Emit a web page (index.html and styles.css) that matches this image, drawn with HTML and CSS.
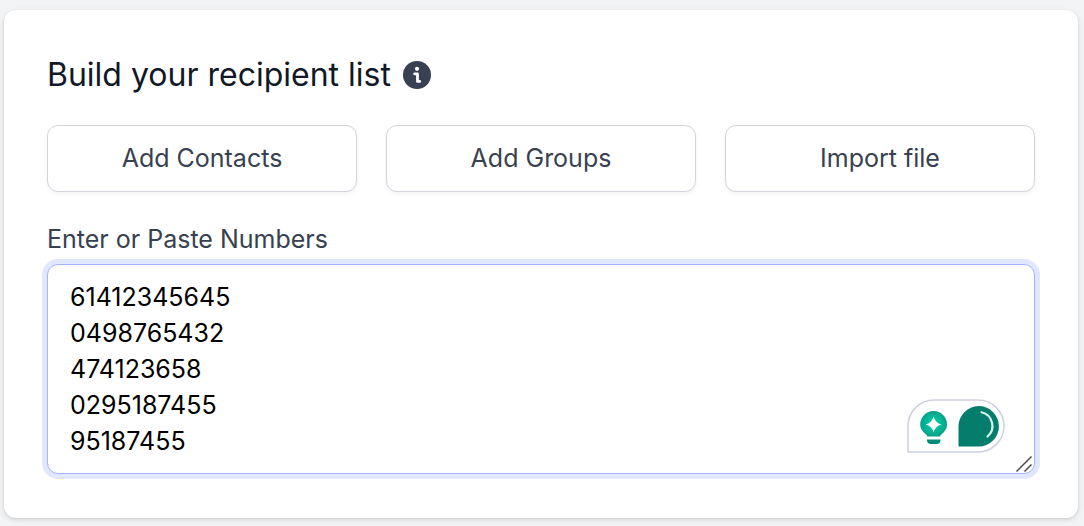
FILE: index.html
```html
<!DOCTYPE html>
<html lang="en">
<head>
    <meta charset="UTF-8">
    <meta name="viewport" content="width=device-width, initial-scale=1.0">
    <title>Build your recipient list</title>
    <link rel="stylesheet" href="styles.css">
</head>
<body>
    <main class="card">
        <div class="card-header">
            <h2 class="card-title">Build your recipient list</h2>
            <svg class="info-icon" viewBox="0 0 28 28" aria-hidden="true">
                <circle cx="14" cy="14" r="14" fill="#374151"/>
                <circle cx="14" cy="7.8" r="2.1" fill="#fff"/>
                <path d="M11.6 12.8h2.9v7.6h2.2" fill="none" stroke="#fff" stroke-width="2.8" stroke-linecap="round" stroke-linejoin="round"/>
            </svg>
        </div>

        <!-- Recipient sources -->
        <div class="source-buttons">
            <button type="button" class="source-button">Add Contacts</button>
            <button type="button" class="source-button">Add Groups</button>
            <button type="button" class="source-button">Import file</button>
        </div>

        <!-- Manual entry -->
        <div class="field">
            <label class="field-label" for="numbers">Enter or Paste Numbers</label>
            <div class="numbers-wrap">
                <textarea class="numbers-input" id="numbers" rows="5" spellcheck="false">61412345645
0498765432
474123658
0295187455
95187455</textarea>
                <svg class="assistant" viewBox="0 0 98 54" aria-hidden="true">
                    <defs>
                        <radialGradient id="bulb">
                            <stop offset="0.3" stop-color="#00c9a0"/>
                            <stop offset="1" stop-color="#05a088"/>
                        </radialGradient>
                    </defs>
                    <path d="M1 53V27A26 26 0 0 1 27 1H71A26 26 0 0 1 71 53Z" fill="#fff" stroke="#cdd1e0" stroke-width="1.5"/>
                    <path d="M20.5 37.5C20 35 13.2 32.5 13.2 25.5a13.4 13.4 0 0 1 26.8 0C40 32.500 33.500 35 33 37.500Z" fill="url(#bulb)"/>
                    <path d="M26.600 17.500Q28.200 23.900 34.600 25.500Q28.200 27.100 26.600 33.500Q25 27.100 18.600 25.500Q25 23.900 26.600 17.500Z" fill="#fff"/>
                    <path d="M20 40.500H33.500V41Q33.500 45 29.500 45H24Q20 45 20 41Z" fill="#028b78"/>
                    <path d="M51.500 47.500V27.500A20.200 20.200 0 1 1 71.700 47.500Z" fill="#047d6c"/>
                    <path d="M74.500 13.200A14 14 0 0 1 80.500 37.500" fill="none" stroke="#d5f3ec" stroke-width="2.200" stroke-linecap="round"/>
                </svg>
                <svg class="resize-grip" viewBox="0 0 18 18" aria-hidden="true">
                    <path d="M1.500 16.500L16.500 1.500M9.500 16.500L16.500 9.500" stroke="#4b4b4b" stroke-width="1.500"/>
                </svg>
            </div>
        </div>
    </main>
</body>
</html>
```
FILE: styles.css
```css
/* Global Styles */
* {
    box-sizing: border-box;
    font-family: Inter, "Liberation Sans", sans-serif;
}

body {
    margin: 0;
    padding: 10px 6px 8px 4px;
    background-color: #f3f4f6;
}

/* Card */
.card {
    display: flex;
    flex-direction: column;
    gap: 29px;
    padding: 44px 43px;
    background-color: #fff;
    border-radius: 12px;
    box-shadow: 0 2px 6px rgba(0, 0, 0, 0.1), 0 1px 3px rgba(0, 0, 0, 0.08);
}

.card-header {
    display: flex;
    align-items: center;
    gap: 12px;
}

.card-title {
    margin: 0;
    font-size: 32px;
    font-weight: 400;
    line-height: 42px;
    color: #111827;
}

.info-icon {
    width: 28px;
    height: 28px;
}

/* Source Buttons */
.source-buttons {
    display: grid;
    grid-template-columns: repeat(3, 1fr);
    gap: 29px;
}

.source-button {
    padding: 15px;
    border: 1px solid #d1d5db;
    border-radius: 11px;
    background-color: #fff;
    box-shadow: 0 2px 4px rgba(0, 0, 0, 0.05);
    color: #374151;
    font-size: 25px;
    line-height: 35px;
    cursor: pointer;
}

.source-button:hover {
    background-color: #f9fafb;
}

/* Numbers Field */
.field {
    display: flex;
    flex-direction: column;
    gap: 7px;
}

.field-label {
    color: #374151;
    font-size: 25px;
    line-height: 36px;
}

.numbers-wrap {
    display: flex;
    position: relative;
}

.numbers-input {
    flex: 1;
    margin: 0;
    padding: 14px 22px;
    border: 1px solid #a5b4fc;
    border-radius: 11px;
    outline: none;
    box-shadow: 0 0 0 5px #e0e7ff;
    color: #000;
    font-size: 25px;
    line-height: 36px;
    resize: none;
}

/* Overlays in the textarea corner */
.assistant {
    position: absolute;
    right: 30px;
    bottom: 21px;
    width: 98px;
    height: 54px;
}

.resize-grip {
    position: absolute;
    right: 2px;
    bottom: 1px;
    width: 18px;
    height: 18px;
}
```
